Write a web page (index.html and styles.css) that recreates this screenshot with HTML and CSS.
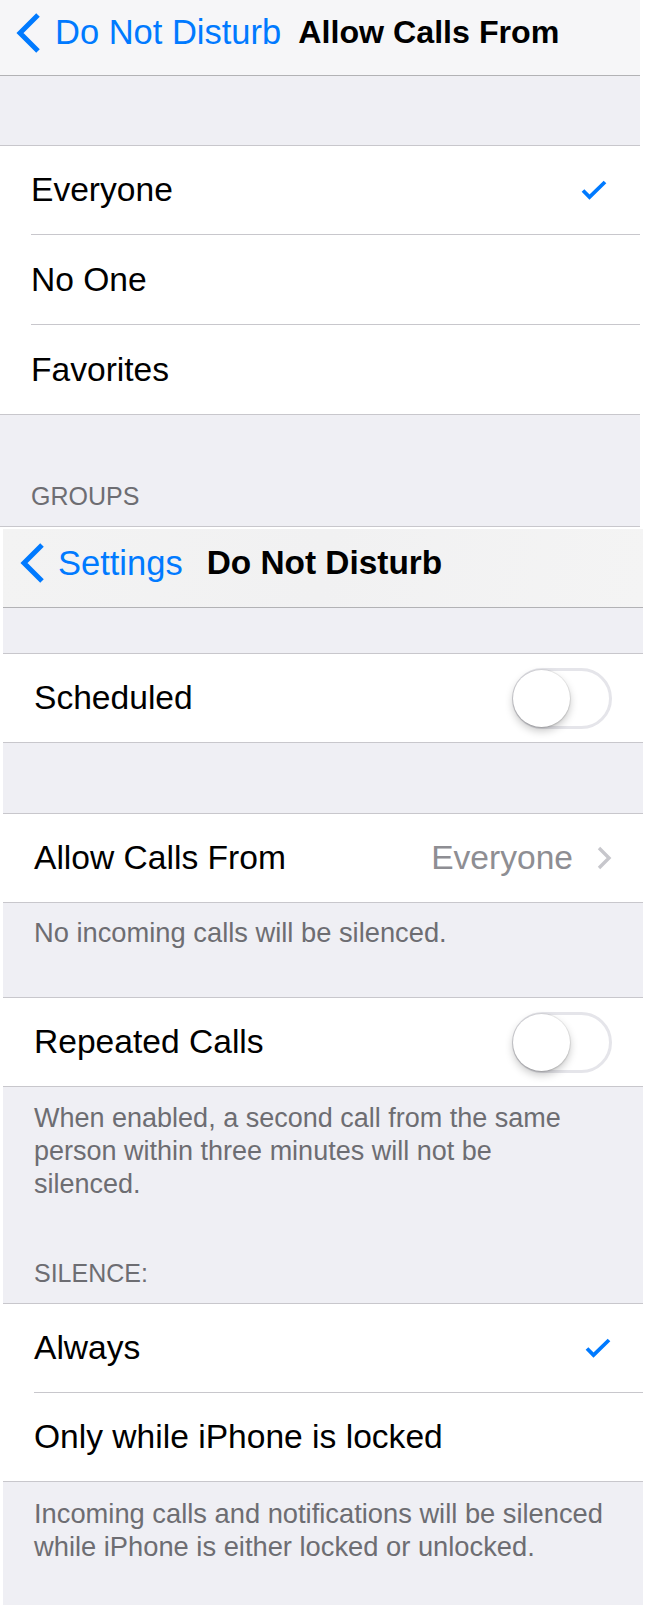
FILE: index.html
```html
<!DOCTYPE html>
<html lang="en">
<head>
<meta charset="utf-8">
<title>Do Not Disturb</title>
<link rel="stylesheet" href="styles.css">
</head>
<body>
<div class="screen screen-top">
  <header class="nav nav-top">
    <svg class="back-chevron" width="28" height="42" viewBox="0 0 28 42"><path d="M24 3 L6 21 L24 39" /></svg>
    <span class="back-label">Do Not Disturb</span>
    <span class="nav-title title-top">Allow Calls From</span>
  </header>
  <div class="spacer spacer-top1"></div>
  <div class="group group-tall">
    <div class="row"><div class="row-inner"><span class="label">Everyone</span><svg class="check" width="28" height="22" viewBox="0 0 28 22"><path d="M3 11.5 L9.5 18 L25 3"/></svg></div></div>
    <div class="row"><div class="row-inner"><span class="label">No One</span></div></div>
    <div class="row"><div class="row-inner"><span class="label">Favorites</span></div></div>
  </div>
  <div class="section-header header-groups">GROUPS</div>
</div>

<div class="screen screen-bottom">
  <header class="nav nav-bottom">
    <svg class="back-chevron" width="28" height="42" viewBox="0 0 28 42"><path d="M24 3 L6 21 L24 39" /></svg>
    <span class="back-label">Settings</span>
    <span class="nav-title title-bottom">Do Not Disturb</span>
  </header>
  <div class="spacer spacer-top2"></div>
  <div class="group">
    <div class="row"><div class="row-inner"><span class="label">Scheduled</span><span class="toggle"><span class="knob"></span></span></div></div>
  </div>
  <div class="spacer spacer-mid"></div>
  <div class="group">
    <div class="row"><div class="row-inner"><span class="label">Allow Calls From</span><span class="value">Everyone</span><svg class="disclosure" width="16" height="26" viewBox="0 0 16 26"><path d="M3 3 L13 13 L3 23"/></svg></div></div>
  </div>
  <div class="footer footer-one">No incoming calls will be silenced.</div>
  <div class="group">
    <div class="row"><div class="row-inner"><span class="label">Repeated Calls</span><span class="toggle"><span class="knob"></span></span></div></div>
  </div>
  <div class="footer footer-two">When enabled, a second call from the same<br>person within three minutes will not be<br>silenced.</div>
  <div class="section-header header-silence">SILENCE:</div>
  <div class="group">
    <div class="row"><div class="row-inner"><span class="label">Always</span><svg class="check" width="28" height="22" viewBox="0 0 28 22"><path d="M3 11.5 L9.5 18 L25 3"/></svg></div></div>
    <div class="row"><div class="row-inner"><span class="label">Only while iPhone is locked</span></div></div>
  </div>
  <div class="footer footer-three">Incoming calls and notifications will be silenced<br>while iPhone is either locked or unlocked.</div>
</div>
</body>
</html>
```

FILE: styles.css
```css
html, body {
  margin: 0;
  padding: 0;
  background: #ffffff;
}

body {
  width: 645px;
  font-family: "Liberation Sans", Arial, sans-serif;
  color: #000;
}

.screen {
  width: 640px;
  background: #efeff4;
}

.screen-top {
  border-bottom: 1px solid #c8c7cc;
}

.screen-bottom {
  margin-top: 2px;
  margin-left: 3px;
  min-height: 1076px;
}

/* Navigation bars */
.nav {
  display: flex;
  align-items: center;
  box-sizing: border-box;
  border-bottom: 1px solid #b2b2b5;
}

.nav-top {
  height: 76px;
  padding-left: 14px;
  padding-bottom: 10px;
  background: #f6f6f8;
}

.nav-bottom {
  height: 79px;
  padding-left: 15px;
  padding-bottom: 10px;
  background: linear-gradient(100deg, #f3f3f3 0%, #f1f1f2 50%, #f4f4f4 100%);
}

.back-chevron {
  flex: none;
  margin-right: 13px;
}

.nav-bottom .back-chevron {
  margin-right: 12px;
}

.back-chevron path {
  fill: none;
  stroke: #007aff;
  stroke-width: 5;
  stroke-linecap: butt;
  stroke-linejoin: miter;
}

.back-label {
  font-size: 34.5px;
  color: #007aff;
  white-space: nowrap;
}

.nav-title {
  font-weight: bold;
  white-space: nowrap;
  color: #000;
}

.title-top {
  font-size: 32.2px;
  margin-left: 17px;
}

.title-bottom {
  font-size: 33.4px;
  margin-left: 24px;
}

/* Spacers */
.spacer-top1 { height: 69px; }
.spacer-top2 { height: 45px; }
.spacer-mid { height: 70px; }

/* Groups and rows */
.group {
  background: #ffffff;
  border-top: 1px solid #c8c7cc;
  border-bottom: 1px solid #c8c7cc;
}

.row {
  padding-left: 31px;
}

.row-inner {
  display: flex;
  align-items: center;
  height: 88px;
  padding-right: 31px;
  border-bottom: 1px solid #c8c7cc;
}

.group-tall .row-inner {
  height: 89px;
  padding-right: 32px;
}

.group-tall .row:first-child .row-inner {
  height: 88px;
}

.row:last-child .row-inner {
  border-bottom: none;
}

.label {
  flex: 1;
  font-size: 33.6px;
  white-space: nowrap;
}

.value {
  font-size: 33.6px;
  color: #8e8e93;
  margin-right: 23px;
  white-space: nowrap;
}

.check path {
  fill: none;
  stroke: #007aff;
  stroke-width: 3.8;
  stroke-linecap: butt;
  stroke-linejoin: miter;
}

.disclosure path {
  fill: none;
  stroke: #c7c7cc;
  stroke-width: 3.4;
  stroke-linecap: butt;
  stroke-linejoin: miter;
}

/* Toggle switch */
.toggle {
  position: relative;
  flex: none;
  box-sizing: border-box;
  width: 100px;
  height: 61px;
  border: 3px solid #e5e5ea;
  border-radius: 31px;
  background: #ffffff;
}

.knob {
  position: absolute;
  left: -2px;
  top: -1px;
  width: 57px;
  height: 57px;
  border-radius: 50%;
  background: #ffffff;
  box-shadow: 0 4px 8px rgba(0, 0, 0, 0.22), 0 0 0 1px rgba(0, 0, 0, 0.06), 0 1px 2px rgba(0, 0, 0, 0.12);
}

/* Section headers and footers */
.section-header {
  font-size: 25px;
  line-height: 30px;
  color: #6d6d72;
  padding-left: 31px;
}

.header-groups {
  padding-top: 66px;
  padding-bottom: 15px;
}

.header-silence {
  padding-top: 57px;
  padding-bottom: 15px;
}

.footer {
  font-size: 27.3px;
  color: #6d6d72;
  padding-left: 31px;
  padding-right: 10px;
}

.footer-one {
  line-height: 32px;
  padding-top: 14px;
  padding-bottom: 48px;
}

.footer-two {
  font-size: 27px;
  line-height: 33px;
  padding-top: 15px;
}

.footer-three {
  line-height: 33px;
  padding-top: 15px;
  padding-bottom: 40px;
}
```
